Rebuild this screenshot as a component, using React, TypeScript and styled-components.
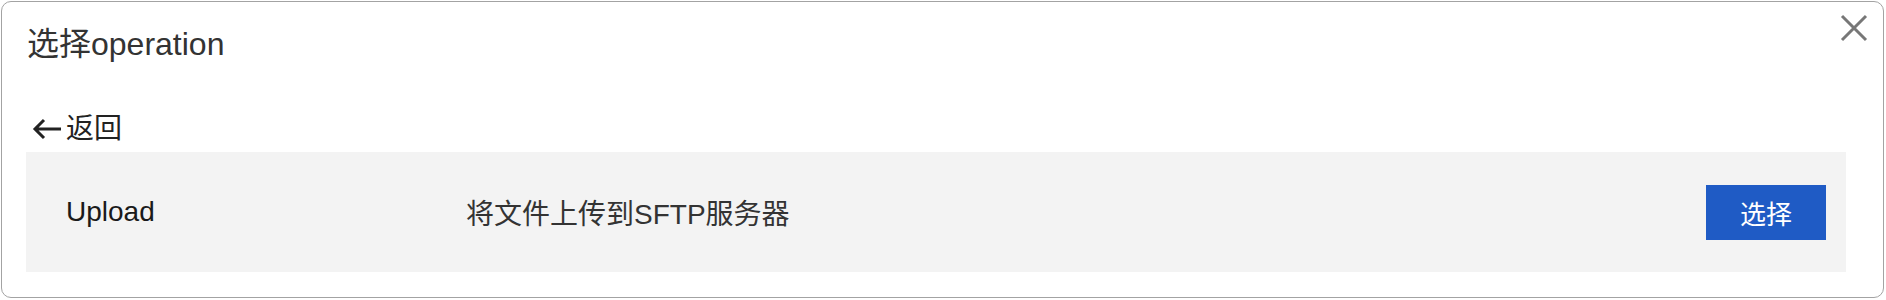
import styled, { createGlobalStyle } from "styled-components";

const GlobalStyle = createGlobalStyle`
  html, body {
    margin: 0;
    padding: 0;
    background: #fff;
  }
  body {
    padding: 1px;
    font-family: "Liberation Sans", "Noto Sans CJK SC", sans-serif;
  }
`;

const operations = [
  { name: "Upload", desc: "将文件上传到SFTP服务器" },
];

const App: React.FC = () => {
  return (
    <>
      <GlobalStyle />
      <Dialog>
        <Header>
          <Title>选择operation</Title>
          <CloseButton aria-label="close">
            <svg width="28" height="28" viewBox="0 0 28 28">
              <path
                d="M2 2L26 26M26 2L2 26"
                stroke="#777"
                strokeWidth="3"
                fill="none"
              />
            </svg>
          </CloseButton>
        </Header>
        <Body>
          <BackLink>
            <svg width="30" height="24" viewBox="0 0 30 24">
              <path
                d="M29 12H3M12 3L3 12l9 9"
                stroke="#222"
                strokeWidth="3"
                fill="none"
              />
            </svg>
            <span>返回</span>
          </BackLink>
          {operations.map((op) => (
            <OperationRow key={op.name}>
              <OpName>{op.name}</OpName>
              <OpDesc>{op.desc}</OpDesc>
              <SelectButton>选择</SelectButton>
            </OperationRow>
          ))}
        </Body>
      </Dialog>
    </>
  );
};

export default App;

const Dialog = styled.div`
  box-sizing: border-box;
  width: 1883px;
  height: 297px;
  border: 1px solid #a3a3a3;
  border-radius: 10px;
  background: #fff;
  display: flex;
  flex-direction: column;
`;

const Header = styled.div`
  display: flex;
  justify-content: space-between;
  align-items: flex-start;
  padding: 0 15px 0 25px;
`;

const Title = styled.h2`
  margin: 22px 0 0;
  font-size: 32px;
  line-height: 40px;
  font-weight: normal;
  color: #333;
`;

const CloseButton = styled.button`
  margin-top: 12px;
  padding: 0;
  border: none;
  background: none;
  width: 28px;
  height: 28px;
  cursor: pointer;
  display: flex;
`;

const Body = styled.div`
  padding: 0 37px 0 24px;
`;

const BackLink = styled.div`
  margin: 47px 0 5px 6px;
  display: flex;
  align-items: center;
  gap: 4px;
  font-size: 28px;
  line-height: 36px;
  color: #222;
  cursor: pointer;
`;

const OperationRow = styled.div`
  height: 120px;
  background: #f3f3f3;
  display: flex;
  align-items: center;
  padding: 0 20px 0 40px;
`;

const OpName = styled.div`
  width: 400px;
  font-size: 28px;
  color: #1a1a1a;
`;

const OpDesc = styled.div`
  flex: 1;
  font-size: 28px;
  color: #333;
`;

const SelectButton = styled.button`
  width: 120px;
  height: 55px;
  border: none;
  background: #1f5bc5;
  color: #fff;
  font-family: inherit;
  font-size: 26px;
  cursor: pointer;
`;
